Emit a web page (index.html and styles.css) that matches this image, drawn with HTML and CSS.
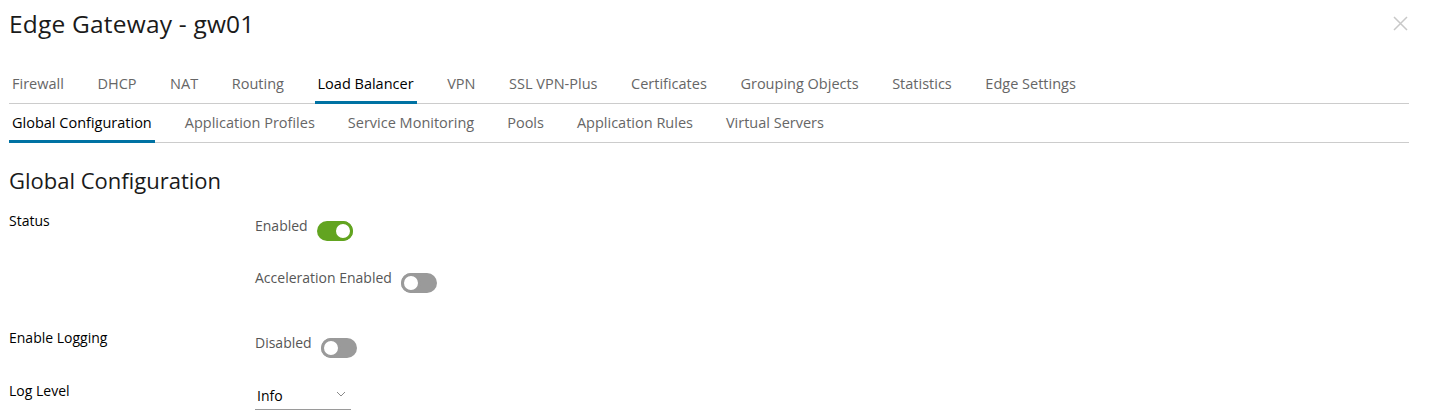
FILE: index.html
```html
<!DOCTYPE html>
<html lang="en">
<head>
    <meta charset="UTF-8">
    <title>Edge Gateway - gw01</title>
    <link rel="stylesheet" href="styles.css">
</head>
<body>
    <div class="modal">
        <div class="modal-header">
            <h1 class="modal-title">Edge Gateway - gw01</h1>
            <button class="close-btn" aria-label="Close">
                <svg width="15" height="15" viewBox="0 0 15 15">
                    <path d="M1 1 L14 14 M14 1 L1 14" stroke="#c8c8c8" stroke-width="1.5" fill="none"/>
                </svg>
            </button>
        </div>

        <nav class="tabs main-tabs">
            <a class="tab">Firewall</a>
            <a class="tab">DHCP</a>
            <a class="tab">NAT</a>
            <a class="tab">Routing</a>
            <a class="tab active">Load Balancer</a>
            <a class="tab">VPN</a>
            <a class="tab">SSL VPN-Plus</a>
            <a class="tab">Certificates</a>
            <a class="tab">Grouping Objects</a>
            <a class="tab">Statistics</a>
            <a class="tab">Edge Settings</a>
        </nav>
        <nav class="tabs">
            <a class="tab active">Global Configuration</a>
            <a class="tab">Application Profiles</a>
            <a class="tab">Service Monitoring</a>
            <a class="tab">Pools</a>
            <a class="tab">Application Rules</a>
            <a class="tab">Virtual Servers</a>
        </nav>

        <h2 class="section-title">Global Configuration</h2>

        <div class="form-row">
            <div class="form-label">Status</div>
            <div class="form-values">
                <div class="toggle-line">
                    <span class="toggle-text">Enabled</span>
                    <span class="toggle on"></span>
                </div>
                <div class="toggle-line second">
                    <span class="toggle-text">Acceleration Enabled</span>
                    <span class="toggle"></span>
                </div>
            </div>
        </div>

        <div class="form-row logging">
            <div class="form-label">Enable Logging</div>
            <div class="form-values">
                <div class="toggle-line">
                    <span class="toggle-text">Disabled</span>
                    <span class="toggle"></span>
                </div>
            </div>
        </div>

        <div class="form-row level">
            <div class="form-label">Log Level</div>
            <div class="form-values">
                <div class="select">
                    <span>Info</span>
                    <svg width="10" height="6" viewBox="0 0 10 6">
                        <path d="M1 1 L5 5 L9 1" stroke="#8a8a8a" stroke-width="1" fill="none"/>
                    </svg>
                </div>
            </div>
        </div>
    </div>
</body>
</html>
```

FILE: styles.css
```css
body {
    margin: 0;
    font-family: "Open Sans", "Liberation Sans", sans-serif;
    color: #000;
    background: #fff;
}
.modal {
    padding: 0 20px 0 9px;
}
.modal-header {
    display: flex;
    justify-content: space-between;
    align-items: center;
    height: 46px;
}
.modal-title {
    margin: 0;
    font-size: 24.5px;
    font-weight: 400;
    letter-spacing: 0.2px;
    color: #1a1a1a;
}
.close-btn {
    border: none;
    background: none;
    padding: 0;
    margin-right: 1px;
    display: flex;
}
.tabs {
    display: flex;
    border-bottom: 1px solid #cccccc;
    margin-top: 19px;
}
.tabs + .tabs {
    margin-top: 0;
}
.tab {
    font-size: 14.5px;
    color: #666;
    line-height: 35px;
    padding: 1px 3px 0;
    margin-right: 27px;
    border-bottom: 3px solid transparent;
    margin-bottom: -1px;
}
.main-tabs .tab {
    margin-right: 27.6px;
}
.tab.active {
    color: #000;
    border-bottom-color: #0072a3;
}
.section-title {
    margin: 22px 0 0;
    font-size: 22px;
    font-weight: 400;
    line-height: 30px;
    color: #1a1a1a;
}
.form-row {
    display: flex;
    margin-top: 14px;
}
.form-label {
    width: 246px;
    font-size: 14px;
    line-height: 24px;
}
.form-values {
    padding-top: 5px;
}
.toggle-line {
    display: flex;
    align-items: flex-start;
    gap: 9px;
}
.toggle-line.second {
    margin-top: 25px;
}
.toggle-text {
    font-size: 14px;
    line-height: 24px;
    color: #565656;
}
.toggle {
    position: relative;
    width: 36px;
    height: 20px;
    border-radius: 10px;
    background: #9a9a9a;
    margin-top: 7px;
}
.toggle::after {
    content: "";
    position: absolute;
    left: 0;
    top: 0;
    width: 14px;
    height: 14px;
    border-radius: 50%;
    background: #fff;
    border: 3px solid #9a9a9a;
}
.toggle.on {
    background: #62a420;
}
.toggle.on::after {
    left: auto;
    right: 0;
    border-color: #62a420;
}
.form-row.logging {
    margin-top: 33px;
}
.form-row.level {
    margin-top: 21px;
}
.select {
    width: 96px;
    display: flex;
    justify-content: space-between;
    align-items: center;
    border-bottom: 1px solid #9a9a9a;
    font-size: 14px;
    line-height: 24px;
    padding: 0 0 1px 2px;
    box-sizing: border-box;
}
.select svg {
    margin-right: 5px;
    margin-top: -4px;
}
```
